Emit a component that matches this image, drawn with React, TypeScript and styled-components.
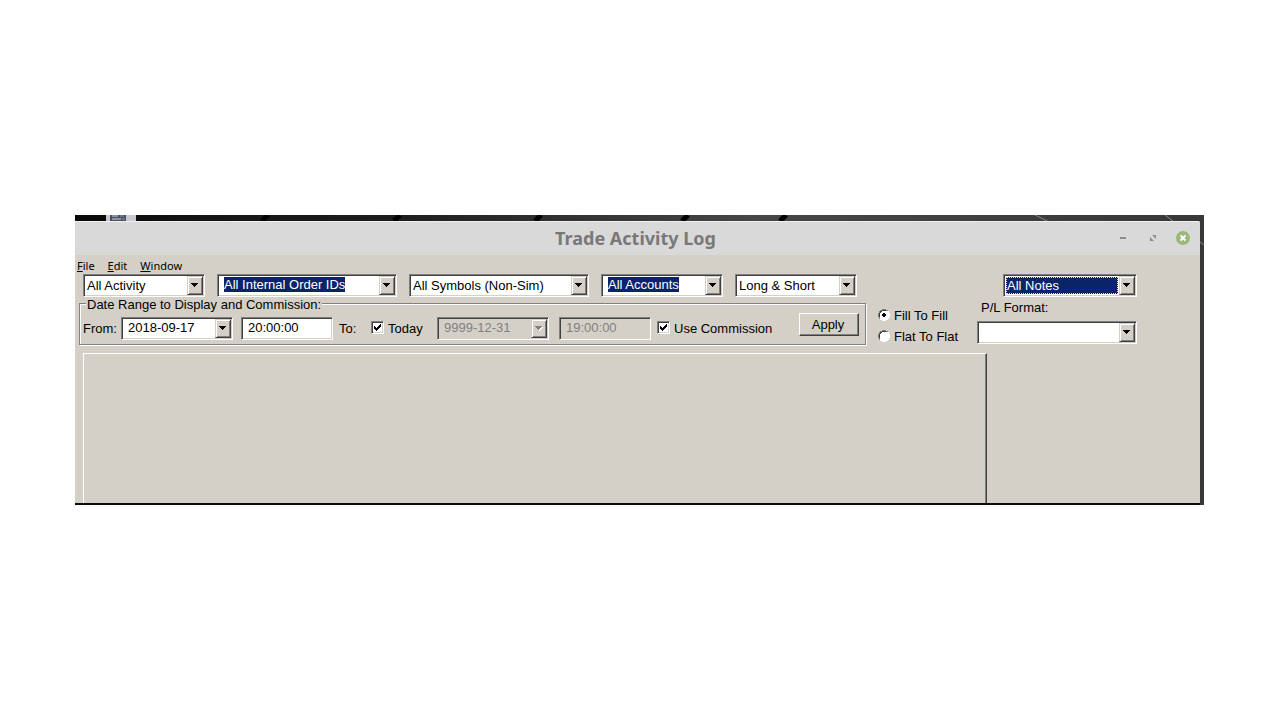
import React from "react";
import styled, { createGlobalStyle, css } from "styled-components";

const face = "#d4d0c8";
const navy = "#0a246a";
const grey = "#808080";
const dark = "#404040";

const GlobalStyle = createGlobalStyle`
  *, *::before, *::after { box-sizing: border-box; }
  body { margin: 0; background: #fff; }
  body, input, select, button {
    font: 13px/15px "Liberation Sans", Arial, sans-serif;
    color: #000;
  }
`;

const Page = styled.div`
  display: flex;
  min-height: 100vh;
  padding: 215px 76px 215px 75px;
`;

const Desktop = styled.div`
  position: relative;
  display: flex;
  flex: 1;
  min-width: 0;
  padding: 6px 4px 2px 0;
  background:
    linear-gradient(#0e0a0d, #0e0a0d) left bottom / calc(100% - 4px) 2px no-repeat,
    linear-gradient(90deg, #080808 0%, #141414 12%, #1c1c1c 28%, #303030 42%, #464646 60%, #383838 100%);
`;

const Wallpaper = styled.svg`
  position: absolute;
  top: 0;
  left: 0;
  width: 100%;
  height: 100%;
`;

const Window = styled.main`
  position: relative;
  display: flex;
  flex: 1;
  flex-direction: column;
  min-width: 0;
  background: ${face};
  border-top-right-radius: 2px;
`;

const TitleBar = styled.header`
  display: grid;
  grid-template-columns: 1fr auto 1fr;
  align-items: center;
  height: 34px;
  padding: 0 10px 1px 6px;
  background: #d9d9d9;
  border-top: 1px solid #f0f0f0;
  border-top-right-radius: 2px;
`;

const Title = styled.h1`
  grid-column: 2;
  margin: 0;
  font: bold 18px/24px "Noto Sans", sans-serif;
  color: #787878;
`;

const WindowButtons = styled.div`
  display: flex;
  justify-content: flex-end;
  gap: 16px;
`;

const WindowButton = styled.button`
  width: 14px;
  height: 14px;
  padding: 0;
  border: 0;
  background: none;
  svg { display: block; }
`;

const MenuBar = styled.nav`
  display: flex;
  gap: 13px;
  height: 19px;
  padding: 3px 2px 0;
`;

const MenuLink = styled.a`
  font: 11px/15px "Noto Sans", sans-serif;
  color: #000;
  text-decoration: none;
`;

const Controls = styled.div`
  display: flex;
  padding-left: 4px;
`;

const Filters = styled.div`
  width: 788px;
`;

const FilterRow = styled.div`
  display: flex;
  gap: 12px;
  padding-left: 4px;
`;

const sunken = css`
  border: 1px solid;
  border-color: ${grey} #fff #fff ${grey};
  box-shadow: inset 1px 1px 0 ${dark}, inset -1px -1px 0 ${face};
`;

const Field = styled.div<{ $width: number; $disabled?: boolean }>`
  ${sunken}
  display: grid;
  grid-template-columns: minmax(0, 1fr) 16px;
  width: ${(p) => p.$width}px;
  height: 23px;
  padding: 1px;
  background: ${(p) => (p.$disabled ? face : "#fff")};
`;

const NativeSelect = styled.select<{ $focused?: boolean }>`
  grid-area: 1 / 1 / 2 / 3;
  appearance: none;
  height: 19px;
  padding: 0 18px 0 2px;
  border: 0;
  border-radius: 0;
  outline: 0;
  background: none;
  ${(p) =>
    p.$focused &&
    css`
      height: 17px;
      margin: 1px 17px 1px 1px;
      padding: 0;
      border: 1px dotted #f5db95;
      background: ${navy};
      color: #fff;
    `}
`;

const Entry = styled.input<{ $selected?: boolean }>`
  min-width: 0;
  height: 15px;
  margin: 1px 0 0 5px;
  padding: 0;
  border: 0;
  outline: 0;
  background: none;
  &:disabled { color: ${grey}; }
  ${(p) =>
    p.$selected &&
    css`
      field-sizing: content;
      justify-self: start;
      background: ${navy};
      color: #fff;
    `}
`;

const raised = css`
  border: 1px solid;
  border-color: #fff ${dark} ${dark} #fff;
  box-shadow: inset -1px -1px 0 ${grey};
  background: ${face};
`;

const arrowBox = css`
  ${raised}
  display: flex;
  align-items: center;
  justify-content: center;
  width: 16px;
  height: 19px;
  padding: 0 1px 1px 0;
  border-color: ${face} ${dark} ${dark} ${face};
  box-shadow: inset 1px 1px 0 #fff, inset -1px -1px 0 ${grey};
`;

const ArrowFace = styled.span`
  ${arrowBox}
  grid-area: 1 / 2;
  pointer-events: none;
`;

const ArrowButton = styled.button`
  ${arrowBox}
`;

const TimeEntry = styled.input`
  ${sunken}
  width: 92px;
  height: 23px;
  padding: 0 6px 2px;
  background: #fff;
  &:disabled { background: ${face}; color: ${grey}; }
`;

const GroupBox = styled.fieldset`
  display: block;
  height: 48px;
  margin: 0 1px 0 0;
  padding: 0 6px 0 3px;
  border: 1px solid ${grey};
  box-shadow: 1px 1px 0 #fff, inset 1px 1px 0 #fff;
`;

const Legend = styled.legend`
  height: 13px;
  margin-left: 3px;
  padding: 0 1px;
  line-height: 15px;
  background: ${face};
`;

const GroupRow = styled.div`
  display: flex;
  align-items: flex-start;
  gap: 6px;
  padding-top: 3px;
`;

const DateGroup = styled.div<{ $gap: number }>`
  display: flex;
  align-items: center;
  gap: ${(p) => p.$gap}px;
  padding-top: 4px;
`;

const FieldLabel = styled.label<{ $width: number }>`
  width: ${(p) => p.$width}px;
`;

const CheckLabel = styled.label<{ $width: number }>`
  display: flex;
  align-items: center;
  gap: 4px;
  width: ${(p) => p.$width}px;
  height: 23px;
  white-space: nowrap;
`;

const CheckMark = styled.svg`
  position: absolute;
  inset: 0;
  pointer-events: none;
`;

const CheckFrame = styled.span`
  position: relative;
  width: 13px;
  height: 13px;
  margin-bottom: 2px;
  input {
    ${sunken}
    display: block;
    appearance: none;
    width: 13px;
    height: 13px;
    margin: 0;
    background: #fff;
  }
  input:not(:checked) + svg { display: none; }
`;

const ApplyButton = styled.button`
  ${raised}
  width: 60px;
  height: 23px;
  margin-left: auto;
  padding: 0 2px 0 0;
`;

const RadioColumn = styled.div`
  display: flex;
  flex-direction: column;
  gap: 6px;
  width: 99px;
  margin-left: 11px;
  padding-top: 34px;
`;

const RadioLabel = styled.label`
  display: flex;
  gap: 4px;
  height: 15px;
  white-space: nowrap;
`;

const RadioFrame = styled.span`
  position: relative;
  width: 12px;
  height: 12px;
  margin-top: 1px;
  input {
    display: block;
    appearance: none;
    width: 12px;
    height: 12px;
    margin: 0;
  }
  input:not(:checked) + svg .dot { display: none; }
`;

const NotesColumn = styled.div`
  display: flex;
  flex-direction: column;
  width: 160px;
`;

const NotesRow = styled.div`
  display: flex;
  justify-content: flex-end;
`;

const FormatLabel = styled.label`
  padding: 3px 4px 6px;
`;

const LogPanel = styled.section`
  flex: 1;
  width: 904px;
  margin: 8px 0 0 8px;
  border: 1px solid;
  border-color: #fff ${dark} transparent #fff;
  border-bottom: 0;
  box-shadow: inset -1px 0 0 ${grey};
`;

function Arrow({ disabled }: { disabled?: boolean }) {
  return (
    <svg width="8" height="5" viewBox="0 0 8 5" shapeRendering="crispEdges" aria-hidden="true">
      {disabled && <path d="M1 1h7v1h-1v1h-1v1h-1v1h-1v-1h-1v-1h-1v-1h-1z" fill="#fff" />}
      <path d="M0 0h7v1h-1v1h-1v1h-1v1h-1v-1h-1v-1h-1v-1h-1z" fill={disabled ? grey : "#000"} />
    </svg>
  );
}

type SelectProps = { label?: string; id?: string; value: string; width: number; focused?: boolean };

function DropDown({ label, id, value, width, focused }: SelectProps) {
  return (
    <Field $width={width}>
      <NativeSelect id={id} aria-label={label} $focused={focused}>
        <option>{value}</option>
      </NativeSelect>
      <ArrowFace>
        <Arrow />
      </ArrowFace>
    </Field>
  );
}

type ComboProps = {
  label: string;
  id?: string;
  value: string;
  width: number;
  selected?: boolean;
  disabled?: boolean;
};

function Combo({ label, id, value, width, selected, disabled }: ComboProps) {
  return (
    <Field $width={width} $disabled={disabled}>
      <Entry id={id} aria-label={label} defaultValue={value} $selected={selected} disabled={disabled} />
      <ArrowButton type="button" aria-label={`Open ${label}`} disabled={disabled}>
        <Arrow disabled={disabled} />
      </ArrowButton>
    </Field>
  );
}

function Check({ label, width }: { label: string; width: number }) {
  return (
    <CheckLabel $width={width}>
      <CheckFrame>
        <input type="checkbox" defaultChecked />
        <CheckMark width="13" height="13" viewBox="0 0 13 13" shapeRendering="crispEdges">
          <path d="M3 5h1v1h1v1h1v-1h1v-1h1v-1h1v-1h1v3h-1v1h-1v1h-1v1h-1v1h-1v-1h-1v-1h-1z" />
        </CheckMark>
      </CheckFrame>
      {label}
    </CheckLabel>
  );
}

function Radio({ label, checked }: { label: string; checked?: boolean }) {
  return (
    <RadioLabel>
      <RadioFrame>
        <input type="radio" name="fill-mode" defaultChecked={checked} />
        <CheckMark width="12" height="12" viewBox="0 0 12 12" shapeRendering="crispEdges">
          <path d="M4 1h4v1h2v2h1v4h-1v2h-2v1h-4v-1h-2v-2h-1v-4h1v-2h2z" fill="#fff" />
          <path d="M4 0h4v1h2v1h-2v-1h-4v1h-2v2h-1v4h1v2h-1v-2h-1v-4h1v-2h1v-1h2z" fill={grey} />
          <path d="M4 1h4v1h-4v1h-1v1h-1v4h-1v-4h1v-2h2z" fill={dark} />
          <path d="M10 2h1v2h1v4h-1v2h-1v1h-2v1h-4v-1h-2v-1h2v1h4v-1h2v-2h1v-4h-1z" fill="#fff" />
          <path className="dot" d="M5 4h2v1h1v2h-1v1h-2v-1h-1v-2h1z" />
        </CheckMark>
      </RadioFrame>
      {label}
    </RadioLabel>
  );
}

export default function App() {
  return (
    <Page>
      <GlobalStyle />
      <Desktop>
        <Wallpaper aria-hidden="true">
          <rect x="31" width="30" height="6" fill="#c9c9cf" />
          <rect x="35" width="16" height="6" fill="#4a5268" />
          <path d="M37 1h6M37 4h9" stroke="#d0d4de" />
          <path d="M45 1h4M47 4h3" stroke="#8a90a0" />
          <path d="M187 6l6-6M319 6l6-6M460 6l6-6M607 6l6-6M705 6l6-6" stroke="#000" strokeWidth="5" />
          <path d="M960 0l14 7M1090 0l39 30" stroke="#8a8a8a" strokeWidth="1" />
        </Wallpaper>
        <Window>
          <TitleBar>
            <Title>Trade Activity Log</Title>
            <WindowButtons>
              <WindowButton type="button" aria-label="Minimize">
                <svg width="14" height="14" viewBox="0 0 14 14">
                  <path d="M4 6h6v2h-6z" fill="#8c8c8c" />
                </svg>
              </WindowButton>
              <WindowButton type="button" aria-label="Maximize">
                <svg width="14" height="14" viewBox="0 0 14 14">
                  <path d="M6 4h4v4zM4 6l4 4h-4z" fill="#8c8c8c" />
                </svg>
              </WindowButton>
              <WindowButton type="button" aria-label="Close">
                <svg width="14" height="14" viewBox="0 0 14 14">
                  <circle cx="7" cy="7" r="7" fill="#9ab87c" />
                  <path d="M4.5 4.5l5 5M9.5 4.5l-5 5" stroke="#fff" strokeWidth="2" />
                </svg>
              </WindowButton>
            </WindowButtons>
          </TitleBar>
          <MenuBar>
            <MenuLink href="#file"><u>F</u>ile</MenuLink>
            <MenuLink href="#edit"><u>E</u>dit</MenuLink>
            <MenuLink href="#window"><u>W</u>indow</MenuLink>
          </MenuBar>
          <Controls>
            <Filters>
              <FilterRow>
                <DropDown label="Activity" value="All Activity" width={122} />
                <Combo label="Internal order IDs" value="All Internal Order IDs" width={180} selected />
                <DropDown label="Symbols" value="All Symbols (Non-Sim)" width={180} />
                <Combo label="Accounts" value="All Accounts" width={122} selected />
                <DropDown label="Side" value="Long &amp; Short" width={122} />
              </FilterRow>
              <GroupBox>
                <Legend>Date Range to Display and Commission:</Legend>
                <GroupRow>
                  <DateGroup $gap={8}>
                    <FieldLabel htmlFor="from-date" $width={30}>From:</FieldLabel>
                    <Combo id="from-date" label="From date" value="2018-09-17" width={112} />
                    <TimeEntry aria-label="From time" defaultValue="20:00:00" />
                  </DateGroup>
                  <DateGroup $gap={10}>
                    <FieldLabel htmlFor="to-date" $width={22}>To:</FieldLabel>
                    <Check label="Today" width={56} />
                    <Combo id="to-date" label="To date" value="9999-12-31" width={112} disabled />
                    <TimeEntry aria-label="To time" defaultValue="19:00:00" disabled />
                  </DateGroup>
                  <DateGroup $gap={0}>
                    <Check label="Use Commission" width={120} />
                  </DateGroup>
                  <ApplyButton type="button">Apply</ApplyButton>
                </GroupRow>
              </GroupBox>
            </Filters>
            <RadioColumn>
              <Radio label="Fill To Fill" checked />
              <Radio label="Flat To Flat" />
            </RadioColumn>
            <NotesColumn>
              <NotesRow>
                <DropDown label="Notes" value="All Notes" width={134} focused />
              </NotesRow>
              <FormatLabel htmlFor="pl-format">P/L Format:</FormatLabel>
              <DropDown id="pl-format" value="" width={160} />
            </NotesColumn>
          </Controls>
          <LogPanel aria-label="Trade activity" />
        </Window>
      </Desktop>
    </Page>
  );
}
